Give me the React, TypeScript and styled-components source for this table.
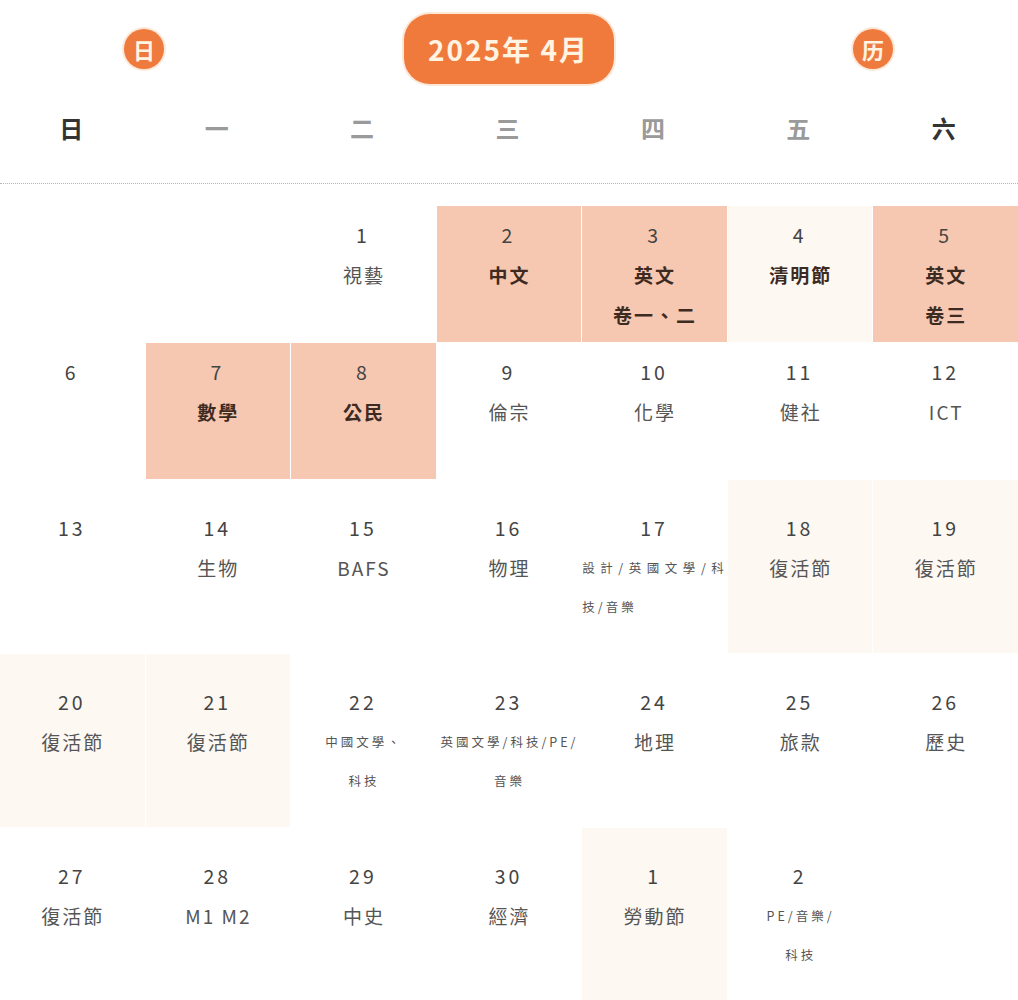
import React from "react";
import styled, { createGlobalStyle } from "styled-components";

const GlobalStyle = createGlobalStyle`
  body {
    margin: 0;
    background: #ffffff;
    font-family: "Noto Sans CJK TC", "Noto Sans", sans-serif;
  }
`;

const Page = styled.div`
  width: 1018px;
  height: 1000px;
  overflow: hidden;
  background: #ffffff;
`;

const Header = styled.div`
  display: flex;
  align-items: center;
  justify-content: space-between;
  padding: 14px 125px 0 124px;
  height: 70px;
`;

const Badge = styled.div`
  width: 40px;
  height: 40px;
  border-radius: 50%;
  background: #ee7a3d;
  box-shadow: 0 0 0 2px #fde8d8;
  color: #fff3e2;
  font-size: 22px;
  font-weight: 700;
  display: flex;
  align-items: center;
  justify-content: center;
`;

const TitlePill = styled.div`
  width: 210px;
  height: 70px;
  border-radius: 26px;
  background: #ef7a3c;
  box-shadow: 0 0 0 2px #fde8d8;
  color: #fff3e2;
  font-size: 28px;
  font-weight: 700;
  letter-spacing: 2px;
  display: flex;
  align-items: center;
  justify-content: center;
`;

const WeekRow = styled.div`
  display: grid;
  grid-template-columns: repeat(7, 1fr);
  margin-top: 24px;
  padding-bottom: 35px;
  border-bottom: 1px dotted #b5b5b5;
`;

const WeekDay = styled.div<{ $weekend?: boolean }>`
  text-align: center;
  font-size: 24px;
  line-height: 40px;
  font-weight: 700;
  padding-right: 3px;
  color: ${(p) => (p.$weekend ? "#333333" : "#9a9a9a")};
`;

const Grid = styled.div`
  display: grid;
  grid-template-columns: repeat(7, 1fr);
  grid-template-rows: 137px 137px 174px 174px 174px;
  column-gap: 1px;
  margin-top: 22px;
`;

type Tone = "salmon" | "cream" | "none";

const toneColor: Record<Tone, string> = {
  salmon: "#f7c8b1",
  cream: "#fdf8f2",
  none: "transparent",
};

const Cell = styled.div<{ $tone: Tone; $tall: boolean }>`
  background: ${(p) => toneColor[p.$tone]};
  padding-top: ${(p) => (p.$tall ? "28px" : "9px")};
  text-align: center;
  color: #444444;
  margin-bottom: 1px;
`;

const DayNum = styled.div`
  font-size: 19.5px;
  line-height: 40px;
  letter-spacing: 3px;
  padding-right: 1px;
  color: #444444;
`;

const Label = styled.div<{ $bold?: boolean; $small?: boolean; $justify?: boolean }>`
  font-size: ${(p) => (p.$small ? "12.5px" : "19px")};
  line-height: ${(p) => (p.$small ? "39px" : "40px")};
  letter-spacing: ${(p) => (p.$small ? "3px" : "2px")};
  font-weight: ${(p) => (p.$bold ? 700 : 400)};
  color: ${(p) => (p.$bold ? "#3d2b22" : "#555555")};
  text-align: ${(p) => (p.$justify ? "justify" : "center")};
  padding-left: ${(p) => (p.$justify ? "0" : "1px")};
`;

type Day = {
  n?: string;
  lines?: string[];
  tone?: Tone;
  bold?: boolean;
  small?: boolean;
  justify?: boolean;
};

const weekDays = ["日", "一", "二", "三", "四", "五", "六"];

const rows: Day[][] = [
  [
    {},
    {},
    { n: "1", lines: ["視藝"] },
    { n: "2", lines: ["中文"], tone: "salmon", bold: true },
    { n: "3", lines: ["英文", "卷一、二"], tone: "salmon", bold: true },
    { n: "4", lines: ["清明節"], tone: "cream", bold: true },
    { n: "5", lines: ["英文", "卷三"], tone: "salmon", bold: true },
  ],
  [
    { n: "6" },
    { n: "7", lines: ["數學"], tone: "salmon", bold: true },
    { n: "8", lines: ["公民"], tone: "salmon", bold: true },
    { n: "9", lines: ["倫宗"] },
    { n: "10", lines: ["化學"] },
    { n: "11", lines: ["健社"] },
    { n: "12", lines: ["ICT"] },
  ],
  [
    { n: "13" },
    { n: "14", lines: ["生物"] },
    { n: "15", lines: ["BAFS"] },
    { n: "16", lines: ["物理"] },
    { n: "17", lines: ["設計/英國文學/科技/音樂"], small: true, justify: true },
    { n: "18", lines: ["復活節"], tone: "cream" },
    { n: "19", lines: ["復活節"], tone: "cream" },
  ],
  [
    { n: "20", lines: ["復活節"], tone: "cream" },
    { n: "21", lines: ["復活節"], tone: "cream" },
    { n: "22", lines: ["中國文學、", "科技"], small: true },
    { n: "23", lines: ["英國文學/科技/PE/", "音樂"], small: true },
    { n: "24", lines: ["地理"] },
    { n: "25", lines: ["旅款"] },
    { n: "26", lines: ["歷史"] },
  ],
  [
    { n: "27", lines: ["復活節"] },
    { n: "28", lines: ["M1 M2"] },
    { n: "29", lines: ["中史"] },
    { n: "30", lines: ["經濟"] },
    { n: "1", lines: ["勞動節"], tone: "cream" },
    { n: "2", lines: ["PE/音樂/", "科技"], small: true },
    {},
  ],
];

export default function App() {
  return (
    <Page>
      <GlobalStyle />
      <Header>
        <Badge>日</Badge>
        <TitlePill>2025年 4月</TitlePill>
        <Badge>历</Badge>
      </Header>
      <WeekRow>
        {weekDays.map((d, i) => (
          <WeekDay key={d} $weekend={i === 0 || i === 6}>
            {d}
          </WeekDay>
        ))}
      </WeekRow>
      <Grid>
        {rows.map((row, r) =>
          row.map((day, c) => (
            <Cell key={`${r}-${c}`} $tone={day.tone ?? "none"} $tall={r >= 2}>
              {day.n && <DayNum>{day.n}</DayNum>}
              {day.lines?.map((line) => (
                <Label key={line} $bold={day.bold} $small={day.small} $justify={day.justify}>
                  {line}
                </Label>
              ))}
            </Cell>
          ))
        )}
      </Grid>
    </Page>
  );
}
